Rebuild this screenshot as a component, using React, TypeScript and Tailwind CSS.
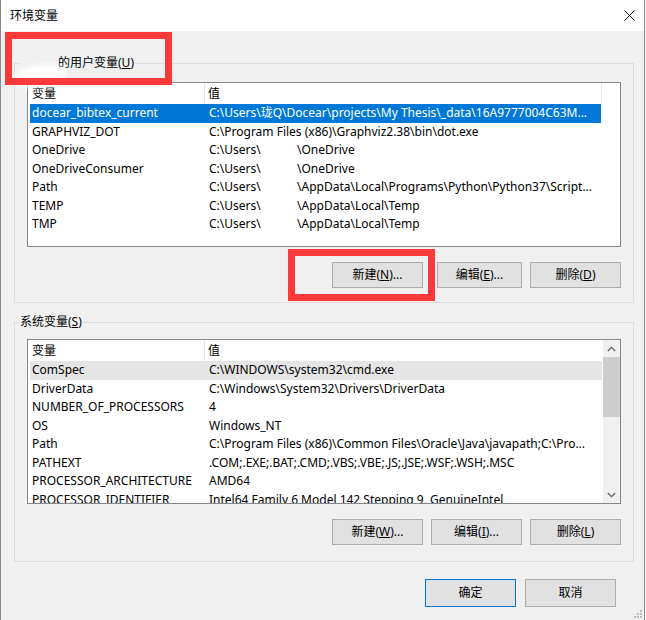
import React from "react";

type Row = {
	name: string;
	value: string;
	masked?: boolean;
	state?: "selected" | "hover";
};

const userVars: Row[] = [
	{
		name: "docear_bibtex_current",
		value: "C:\\Users\\珑Q\\Docear\\projects\\My Thesis\\_data\\16A9777004C63M...",
		state: "selected",
	},
	{ name: "GRAPHVIZ_DOT", value: "C:\\Program Files (x86)\\Graphviz2.38\\bin\\dot.exe" },
	{ name: "OneDrive", value: "\\OneDrive", masked: true },
	{ name: "OneDriveConsumer", value: "\\OneDrive", masked: true },
	{ name: "Path", value: "\\AppData\\Local\\Programs\\Python\\Python37\\Script...", masked: true },
	{ name: "TEMP", value: "\\AppData\\Local\\Temp", masked: true },
	{ name: "TMP", value: "\\AppData\\Local\\Temp", masked: true },
];

const systemVars: Row[] = [
	{ name: "ComSpec", value: "C:\\WINDOWS\\system32\\cmd.exe", state: "hover" },
	{ name: "DriverData", value: "C:\\Windows\\System32\\Drivers\\DriverData" },
	{ name: "NUMBER_OF_PROCESSORS", value: "4" },
	{ name: "OS", value: "Windows_NT" },
	{
		name: "Path",
		value: "C:\\Program Files (x86)\\Common Files\\Oracle\\Java\\javapath;C:\\Pro...",
	},
	{ name: "PATHEXT", value: ".COM;.EXE;.BAT;.CMD;.VBS;.VBE;.JS;.JSE;.WSF;.WSH;.MSC" },
	{ name: "PROCESSOR_ARCHITECTURE", value: "AMD64" },
	{ name: "PROCESSOR_IDENTIFIER", value: "Intel64 Family 6 Model 142 Stepping 9, GenuineIntel" },
];

function Button({
	children,
	className = "",
	primary = false,
}: {
	children: React.ReactNode;
	className?: string;
	primary?: boolean;
}) {
	return (
		<button
			className={`h-[26px] flex items-center justify-center bg-[#e1e1e1] text-black text-[12px] border ${
				primary ? "border-[#0078d7]" : "border-[#adadad]"
			} ${className}`}
		>
			{children}
		</button>
	);
}

function VarRow({ row, wide }: { row: Row; wide?: boolean }) {
	const bg =
		row.state === "selected"
			? "bg-[#0078d7] text-white"
			: row.state === "hover"
				? "bg-[#e5e5e5] text-black"
				: "text-black";
	return (
		<div
			className={`ml-[2px] h-[18.5px] shrink-0 flex items-center whitespace-nowrap overflow-hidden ${
				wide ? "w-[572px]" : "w-[571px]"
			} ${bg}`}
		>
			<span className="w-[177px] shrink-0 pl-[2px]">{row.name}</span>
			<span className="pl-[2px]">
				{row.masked && <span className="inline-block w-[88px]">C:\Users\</span>}
				{row.value}
			</span>
		</div>
	);
}

function ListHeader({ lastDivider }: { lastDivider?: boolean }) {
	return (
		<div className="h-[21px] flex items-center shrink-0">
			<div className="w-[177px] h-full pl-[4px] flex items-center border-r border-[#e5e5e5]">变量</div>
			<div
				className={`w-[397px] h-full pl-[3px] flex items-center ${
					lastDivider ? "border-r border-[#e5e5e5]" : ""
				}`}
			>
				值
			</div>
		</div>
	);
}

function ChevronUp() {
	return (
		<svg width="9" height="6" viewBox="0 0 9 6">
			<path d="M0.8 5 L4.5 1.3 L8.2 5" fill="none" stroke="#606060" strokeWidth="1.2" />
		</svg>
	);
}

function ChevronDown() {
	return (
		<svg width="9" height="6" viewBox="0 0 9 6">
			<path d="M0.8 1 L4.5 4.7 L8.2 1" fill="none" stroke="#606060" strokeWidth="1.2" />
		</svg>
	);
}

export default function App() {
	return (
		<div className="w-[646px] h-[620px] bg-[#f5f5f5] [font-family:'Noto_Sans','Noto_Sans_CJK_SC',sans-serif] text-[12px] leading-[18px] text-black">
			<div className="relative w-[645px] h-[620px] bg-[#f0f0f0] border-l border-r border-[#8a8a8a] flex flex-col overflow-hidden">
				{/* title bar */}
				<div className="h-[31px] bg-white flex items-center justify-between pl-[9px] pr-[9px] shrink-0">
					<span>环境变量</span>
					<svg width="11" height="11" viewBox="0 0 11 11">
						<path d="M0.5 0.5 L10.5 10.5 M10.5 0.5 L0.5 10.5" stroke="#111" strokeWidth="1" />
					</svg>
				</div>

				{/* user variables */}
				<fieldset className="relative ml-[13px] mt-[23px] w-[620px] border border-[#dcdcdc] pl-[12px] pr-[12px] pb-[14px]">
					<legend className="-ml-[8px] px-[1px] leading-[18px]">
						<span className="inline-block w-[38px]" />
						的用户变量(<u>U</u>)
					</legend>
					<div className="absolute left-[-3px] top-[-7px] w-[54px] h-[22px] rounded-[50%] bg-white blur-[2px] -rotate-[8deg]" />
					<div className="mt-[10px] h-[165px] w-[594px] bg-white border border-[#828790] flex flex-col overflow-hidden">
						<ListHeader lastDivider />
						{userVars.map((r) => (
							<VarRow key={r.name} row={r} />
						))}
					</div>
					<div className="mt-[15px] flex justify-end">
						<Button className="w-[91px]">
							<span>
								新建(<u>N</u>)...
							</span>
						</Button>
						<Button className="w-[85px] ml-[14px]">
							<span>
								编辑(<u>E</u>)...
							</span>
						</Button>
						<Button className="w-[91px] ml-[8px]">
							<span>
								删除(<u>D</u>)
							</span>
						</Button>
					</div>
				</fieldset>

				{/* system variables */}
				<fieldset className="ml-[13px] mt-[10px] w-[620px] border border-[#dcdcdc] pl-[12px] pr-[12px] pb-[16px]">
					<legend className="-ml-[8px] px-[1px] leading-[18px]">
						系统变量(<u>S</u>)
					</legend>
					<div className="mt-[8px] h-[165px] w-[594px] bg-white border border-[#828790] flex overflow-hidden">
						<div className="w-[575px] flex flex-col overflow-hidden">
							<ListHeader />
							{systemVars.map((r) => (
								<VarRow key={r.name} row={r} wide />
							))}
						</div>
						<div className="w-[17px] bg-[#f0f0f0] flex flex-col items-center">
							<div className="h-[17px] w-full flex items-center justify-center">
								<ChevronUp />
							</div>
							<div className="w-full h-[60px] bg-[#cdcdcd]" />
							<div className="flex-1" />
							<div className="h-[17px] w-full flex items-center justify-center">
								<ChevronDown />
							</div>
						</div>
					</div>
					<div className="mt-[15px] flex justify-end gap-[8px]">
						<Button className="w-[91px]">
							<span>
								新建(<u>W</u>)...
							</span>
						</Button>
						<Button className="w-[91px]">
							<span>
								编辑(<u>I</u>)...
							</span>
						</Button>
						<Button className="w-[91px]">
							<span>
								删除(<u>L</u>)
							</span>
						</Button>
					</div>
				</fieldset>

				{/* dialog buttons */}
				<div className="mt-[17px] flex justify-end gap-[9px] pr-[28px]">
					<Button primary className="w-[91px] h-[28px]">
						确定
					</Button>
					<Button className="w-[91px] h-[28px]">取消</Button>
				</div>

				{/* size grip */}
				<svg className="absolute right-[1px] bottom-[1px]" width="10" height="10" viewBox="0 0 10 10">
					<g fill="#bdbdbd">
						<rect x="7" y="1" width="2" height="2" />
						<rect x="4" y="4" width="2" height="2" />
						<rect x="7" y="4" width="2" height="2" />
						<rect x="1" y="7" width="2" height="2" />
						<rect x="4" y="7" width="2" height="2" />
						<rect x="7" y="7" width="2" height="2" />
					</g>
				</svg>

				{/* annotation boxes */}
				<div className="absolute left-[4px] top-[32px] w-[167px] h-[53px] border-[7px] border-[#fa3a3a]" />
				<div className="absolute left-[287px] top-[249px] w-[147px] h-[52px] border-[7px] border-[#fa3a3a]" />
			</div>
		</div>
	);
}
